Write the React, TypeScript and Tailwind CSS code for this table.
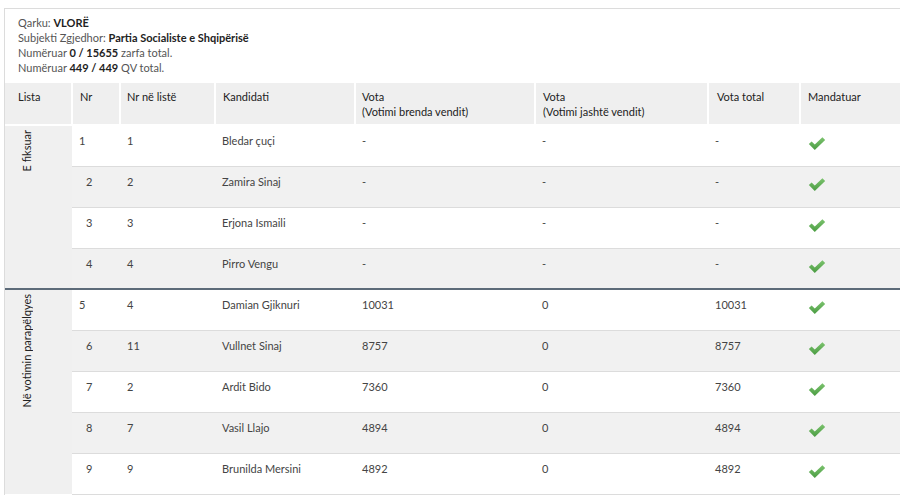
import React from "react";

type Row = {
  nr: string;
  nrListe: string;
  name: string;
  brenda: string;
  jashte: string;
  total: string;
  indent?: boolean;
};

const fiksuar: Row[] = [
  { nr: "1", nrListe: "1", name: "Bledar çuçi", brenda: "-", jashte: "-", total: "-" },
  { nr: "2", nrListe: "2", name: "Zamira Sinaj", brenda: "-", jashte: "-", total: "-", indent: true },
  { nr: "3", nrListe: "3", name: "Erjona Ismaili", brenda: "-", jashte: "-", total: "-", indent: true },
  { nr: "4", nrListe: "4", name: "Pirro Vengu", brenda: "-", jashte: "-", total: "-", indent: true },
];

const parapelqyes: Row[] = [
  { nr: "5", nrListe: "4", name: "Damian Gjiknuri", brenda: "10031", jashte: "0", total: "10031" },
  { nr: "6", nrListe: "11", name: "Vullnet Sinaj", brenda: "8757", jashte: "0", total: "8757", indent: true },
  { nr: "7", nrListe: "2", name: "Ardit Bido", brenda: "7360", jashte: "0", total: "7360", indent: true },
  { nr: "8", nrListe: "7", name: "Vasil Llajo", brenda: "4894", jashte: "0", total: "4894", indent: true },
  { nr: "9", nrListe: "9", name: "Brunilda Mersini", brenda: "4892", jashte: "0", total: "4892", indent: true },
];

const Check = () => (
  <svg width="18" height="14" viewBox="0 0 17 13" className="mt-[2px]">
    <defs>
      <linearGradient id="g" x1="0" y1="0" x2="0" y2="1">
        <stop offset="0" stopColor="#7cc36e" />
        <stop offset="1" stopColor="#4a9c42" />
      </linearGradient>
    </defs>
    <path
      d="M0.8 6.6 L3.4 4.1 L6.4 7 L13.6 0.2 L16.2 2.7 L6.4 12.2 Z"
      fill="url(#g)"
    />
  </svg>
);

const BodyRows = ({
  rows,
  label,
  first,
}: {
  rows: Row[];
  label: string;
  first?: boolean;
}) => (
  <>
    {rows.map((r, i) => {
      const sep = i === 0 && !first ? "border-t-2 border-t-[#5d6b79]" : "";
      const cell = `align-top pt-[7px] px-[7px] h-[41px] border-b border-b-[#dcdcdc] ${sep}`;
      return (
        <tr
          key={r.nr}
          className={i % 2 === 0 ? "bg-white" : "bg-[#f1f1f1]"}
        >
          {i === 0 && (
            <td
              rowSpan={rows.length}
              className={`align-top bg-[#f0f0f0] pl-[15px] pt-[4px] ${sep}`}
            >
              <div className="[writing-mode:vertical-rl] rotate-180 text-[#222] text-[11px] leading-[13px]">
                {label}
              </div>
            </td>
          )}
          <td className={cell}>
            <span className={r.indent ? "pl-[7px]" : ""}>{r.nr}</span>
          </td>
          <td className={cell}>{r.nrListe}</td>
          <td className={`${cell} text-[#444]`}>{r.name}</td>
          <td className={cell}>{r.brenda}</td>
          <td className={cell}>{r.jashte}</td>
          <td className={cell}>{r.total}</td>
          <td className={`align-top pt-[9px] px-[8px] border-b border-b-[#dcdcdc] ${sep}`}>
            <Check />
          </td>
        </tr>
      );
    })}
  </>
);

const App = () => {
  return (
    <div className="w-[900px] h-[499px] overflow-hidden bg-white font-['Lato',sans-serif] text-[11px] text-[#444]">
      <div className="mt-[8px] ml-[4px] border-l border-t border-[#dcdcdc] w-[1000px]">
        <div className="pl-[13px] pt-[6px] pb-[8px] leading-[15px] text-[#555]">
          <div>
            Qarku: <b className="text-[#222]">VLORË</b>
          </div>
          <div>
            Subjekti Zgjedhor: <b className="text-[#222]">Partia Socialiste e Shqipërisë</b>
          </div>
          <div>
            Numëruar <b className="text-[#222]">0 / 15655</b> zarfa total.
          </div>
          <div>
            Numëruar <b className="text-[#222]">449 / 449</b> QV total.
          </div>
        </div>
        <table className="table-fixed border-collapse w-[1000px]">
          <colgroup>
            <col className="w-[67px]" />
            <col className="w-[48px]" />
            <col className="w-[95px]" />
            <col className="w-[140px]" />
            <col className="w-[180px]" />
            <col className="w-[173px]" />
            <col className="w-[92px]" />
            <col />
          </colgroup>
          <thead>
            <tr className="h-[42px] text-left text-[#222] leading-[15px]">
              <th className="align-top font-normal bg-[#efefef] border-r-2 border-b-2 border-white pt-[6px] pl-[13px]">Lista</th>
              <th className="align-top font-normal bg-[#efefef] border-r-2 border-b-2 border-white pt-[6px] px-[7px]">Nr</th>
              <th className="align-top font-normal bg-[#efefef] border-r-2 border-b-2 border-white pt-[6px] px-[6px]">Nr në listë</th>
              <th className="align-top font-normal bg-[#efefef] border-r-2 border-b-2 border-white pt-[6px] px-[7px]">Kandidati</th>
              <th className="align-top font-normal bg-[#efefef] border-r-2 border-b-2 border-white pt-[6px] px-[6px]">
                Vota
                <br />
                (Votimi brenda vendit)
              </th>
              <th className="align-top font-normal bg-[#efefef] border-r-2 border-b-2 border-white pt-[6px] px-[7px]">
                Vota
                <br />
                (Votimi jashtë vendit)
              </th>
              <th className="align-top font-normal bg-[#efefef] border-r-2 border-b-2 border-white pt-[6px] px-[8px]">Vota total</th>
              <th className="align-top font-normal bg-[#efefef] border-b-2 border-white pt-[6px] px-[7px]">Mandatuar</th>
            </tr>
          </thead>
          <tbody>
            <BodyRows rows={fiksuar} label="E fiksuar" first />
            <BodyRows rows={parapelqyes} label="Në votimin parapëlqyes" />
          </tbody>
        </table>
      </div>
    </div>
  );
};

export default App;
